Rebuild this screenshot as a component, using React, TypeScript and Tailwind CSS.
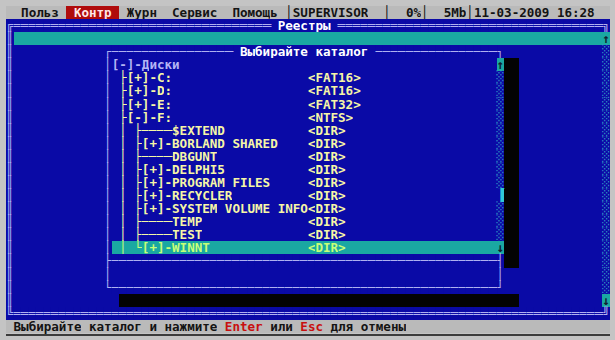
type Cell = { ch: string; fg: string; bg: string };

const COLS = 80;
const ROWS = 25;

// text-mode palette
const BG_BLUE = "bg-[#0a0aa6]";
const BG_CYAN = "bg-[#1aa8a2]";
const BG_GRAY = "bg-[#bababa]";
const BG_RED = "bg-[#b00c0c]";
const BG_BLACK = "bg-[#030303]";

const FG_FRAME = "text-[#b0b0f0]";
const FG_WHITE = "text-[#ffffff]";
const FG_BLACK = "text-[#141414]";
const FG_MENU_HI = "text-[#ffe8e8]";
const FG_RED = "text-[#c81010]";
const FG_ITEM = "text-[#f6f6a6]";
const FG_ROOT = "text-[#b4b4f4]";
const FG_SEL = "text-[#c8ff78]";
const FG_TRACK = "text-[#3aa0c8]";
const FG_ARROW = "text-[#102030]";
const FG_THUMB = "text-[#30c8d8]";

const tree: [string, string][] = [
  ["├[+]-C:", "<FAT16>"],
  ["├[+]-D:", "<FAT16>"],
  ["├[+]-E:", "<FAT32>"],
  ["├[-]-F:", "<NTFS>"],
  ["│ ├────$EXTEND", "<DIR>"],
  ["│ ├[+]-BORLAND SHARED", "<DIR>"],
  ["│ ├────DBGUNT", "<DIR>"],
  ["│ ├[+]-DELPHI5", "<DIR>"],
  ["│ ├[+]-PROGRAM FILES", "<DIR>"],
  ["│ ├[+]-RECYCLER", "<DIR>"],
  ["│ ├[+]-SYSTEM VOLUME INFO", "<DIR>"],
  ["│ ├────TEMP", "<DIR>"],
  ["│ ├────TEST", "<DIR>"],
];

function buildScreen(): Cell[][] {
  const rows: Cell[][] = Array.from({ length: ROWS }, () =>
    Array.from({ length: COLS }, () => ({ ch: " ", fg: FG_FRAME, bg: BG_BLUE }))
  );

  const put = (r: number, c: number, text: string, fg?: string, bg?: string) => {
    [...text].forEach((ch, i) => {
      const cell = rows[r][c + i];
      if (!cell) return;
      cell.ch = ch;
      if (fg) cell.fg = fg;
      if (bg) cell.bg = bg;
    });
  };
  const fill = (r: number, c0: number, c1: number, ch: string, fg?: string, bg?: string) =>
    put(r, c0, ch.repeat(c1 - c0 + 1), fg, bg);

  // menu bar
  fill(0, 0, 79, " ", FG_BLACK, BG_GRAY);
  put(0, 1, " Польз ");
  put(0, 8, " Контр ", FG_MENU_HI, BG_RED);
  put(0, 15, " Журн ");
  put(0, 21, " Сервис ");
  put(0, 29, " Помощь ");
  put(0, 37, "│SUPERVISOR  │  0%│  5Mb│11-03-2009 16:28");

  // outer window "Реестры"
  put(1, 0, "╔");
  fill(1, 1, 78, "═");
  put(1, 35, " Реестры ", FG_WHITE);
  put(1, 79, "╗");
  for (let r = 2; r <= 22; r++) {
    put(r, 0, "║");
    put(r, 79, "░", FG_TRACK);
  }
  fill(2, 1, 78, " ", undefined, BG_CYAN);
  put(2, 79, "↑", FG_ARROW, BG_CYAN);
  put(22, 79, "↓", FG_ARROW, BG_CYAN);
  put(23, 0, "╚");
  fill(23, 1, 78, "═");
  put(23, 79, "╝");

  // dialog "Выбирайте каталог"
  put(3, 13, "┌");
  fill(3, 14, 64, "─");
  put(3, 30, " Выбирайте каталог ", FG_WHITE);
  put(3, 65, "┐");
  for (let r = 4; r <= 20; r++) {
    put(r, 13, "│");
    put(r, 65, r <= 18 ? "░" : "│", r <= 18 ? FG_TRACK : FG_FRAME);
  }
  put(4, 65, "↑", FG_ARROW, BG_CYAN);
  put(14, 65, "▐", FG_THUMB);
  put(19, 13, "├");
  fill(19, 14, 64, "─");
  put(19, 65, "┤");
  put(21, 13, "└");
  fill(21, 14, 64, "─");
  put(21, 65, "┘");

  // shadow
  for (let r = 4; r <= 19; r++) fill(r, 66, 67, " ", undefined, BG_BLACK);
  fill(22, 15, 67, " ", undefined, BG_BLACK);

  // tree
  put(4, 14, "[-]-Диски", FG_ROOT);
  tree.forEach(([name, kind], i) => {
    put(5 + i, 15, name, FG_ITEM);
    put(5 + i, 40, kind, FG_ITEM);
  });
  fill(18, 14, 64, " ", FG_SEL, BG_CYAN);
  put(18, 15, "│ └[+]-WINNT");
  put(18, 40, "<DIR>");
  put(18, 65, "↓", FG_ARROW, BG_CYAN);

  // status line
  fill(24, 0, 79, " ", FG_BLACK, BG_GRAY);
  put(24, 1, "Выбирайте каталог и нажмите ");
  put(24, 29, "Enter", FG_RED);
  put(24, 34, " или ", FG_BLACK);
  put(24, 39, "Esc", FG_RED);
  put(24, 42, " для отмены", FG_BLACK);

  return rows;
}

export default function App() {
  const screen = buildScreen();

  return (
    <div className="h-[340px] w-[615px] overflow-hidden bg-[#c4c4c4] pl-[6px] pt-[6px]">
      <div className="grid grid-cols-[repeat(80,7.55px)] grid-rows-[repeat(25,13.08px)] whitespace-pre font-['DejaVu_Sans_Mono',monospace] text-[12.6px] font-bold leading-[13.08px]">
        {screen.flat().map((cell, i) => (
          <span
            key={i}
            className={`${cell.bg} ${cell.fg} ${cell.ch === "─" || cell.ch === "═" ? "scale-x-[1.15]" : ""}`}
          >
            {cell.ch}
          </span>
        ))}
      </div>
      <div className="mt-[1px] h-[2px] w-[604px] bg-[#3c3c3c]" />
    </div>
  );
}
